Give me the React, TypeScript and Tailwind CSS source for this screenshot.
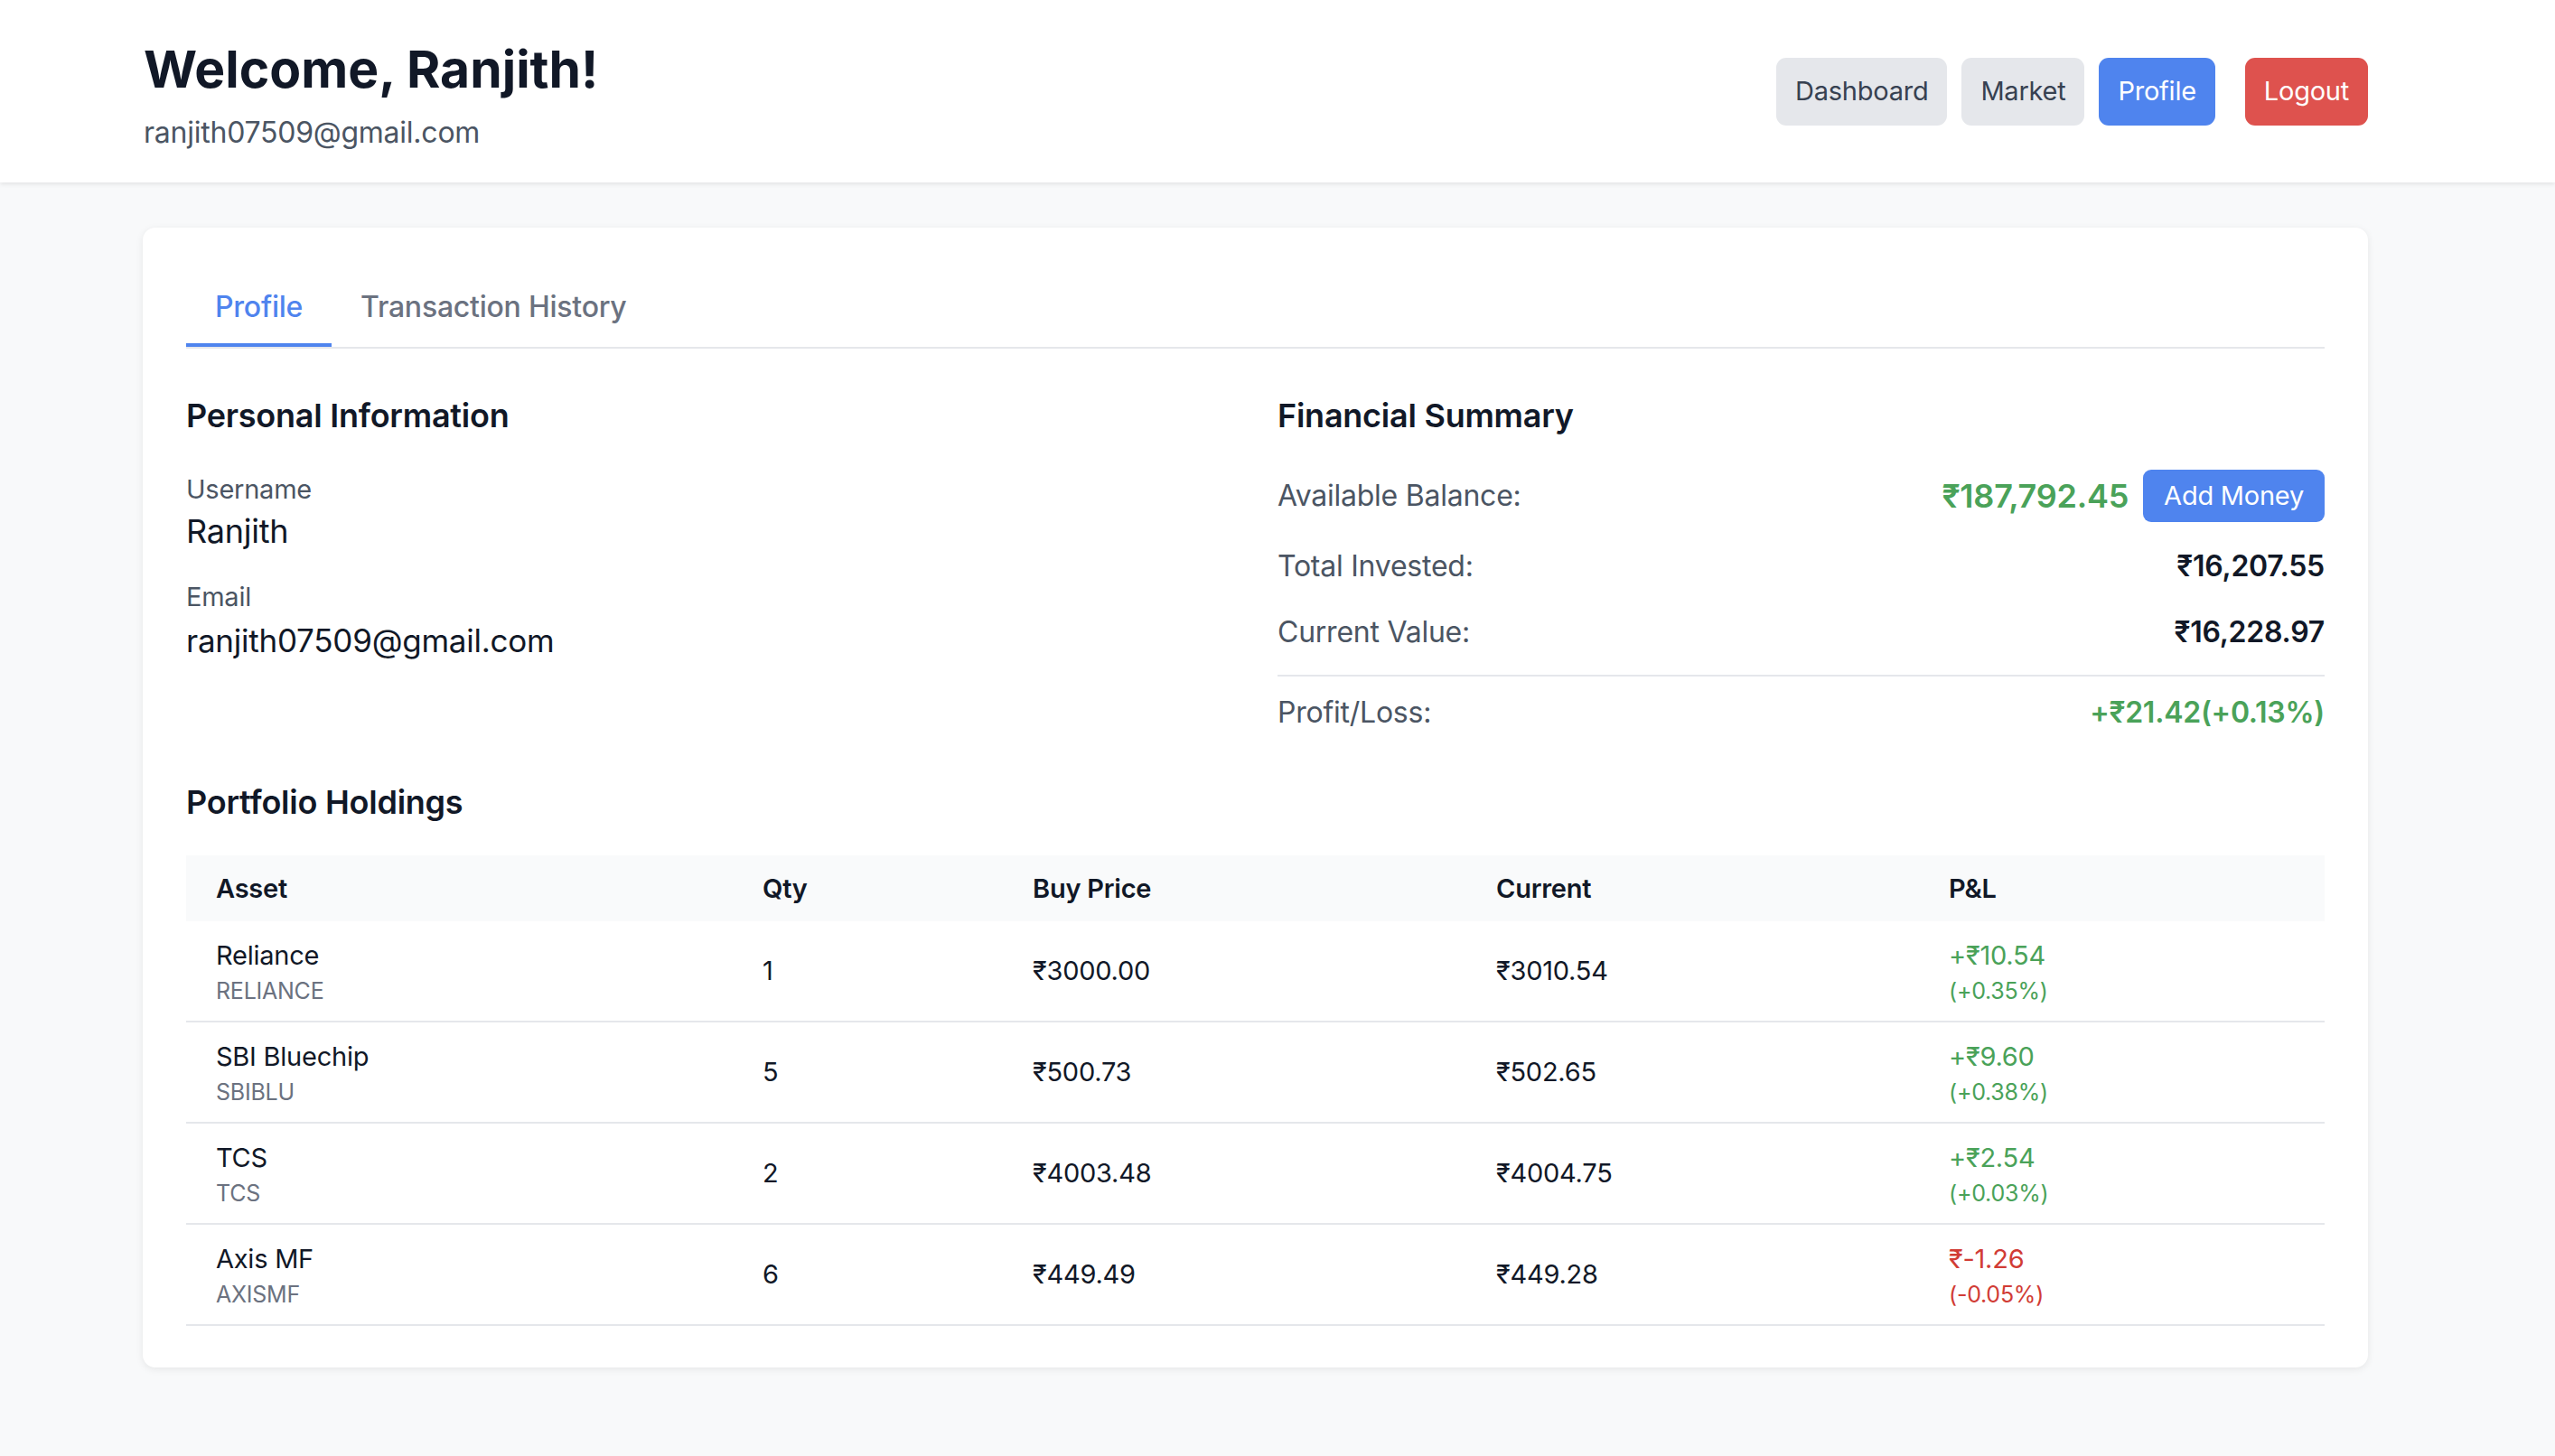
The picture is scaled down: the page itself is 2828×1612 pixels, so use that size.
import React from "react"

const holdings = [
  { name: "Reliance", symbol: "RELIANCE", qty: 1, buy: "₹3000.00", current: "₹3010.54", pl: "+₹10.54", pct: "(+0.35%)", up: true },
  { name: "SBI Bluechip", symbol: "SBIBLU", qty: 5, buy: "₹500.73", current: "₹502.65", pl: "+₹9.60", pct: "(+0.38%)", up: true },
  { name: "TCS", symbol: "TCS", qty: 2, buy: "₹4003.48", current: "₹4004.75", pl: "+₹2.54", pct: "(+0.03%)", up: true },
  { name: "Axis MF", symbol: "AXISMF", qty: 6, buy: "₹449.49", current: "₹449.28", pl: "₹-1.26", pct: "(-0.05%)", up: false },
]

export default function App() {
  return (
    <div className="min-h-screen bg-[#f8f9fa] font-['Inter','Noto_Sans',sans-serif] tracking-[-0.015em] text-[#111827]">
      {/* Header */}
      <header className="h-[202px] bg-white shadow-[0_2px_5px_rgba(0,0,0,0.09)] pl-[159px] pr-[207px] flex items-center justify-between">
        <div className="flex flex-col pt-[14px]">
          <h1 className="text-[57px] leading-[65px] font-bold tracking-normal text-[#111827]">Welcome, Ranjith!</h1>
          <p className="text-[32px] leading-[50px] mt-[13px] text-[#4b5563]">ranjith07509@gmail.com</p>
        </div>
        <nav className="flex items-center">
          <button className="h-[75px] px-[21px] rounded-[11px] bg-[#e5e7eb] text-[#374151] text-[29px]">Dashboard</button>
          <button className="h-[75px] px-[21px] ml-[16px] rounded-[11px] bg-[#e5e7eb] text-[#374151] text-[29px]">Market</button>
          <button className="h-[75px] px-[21px] ml-[16px] rounded-[11px] bg-[#4f84ee] text-white text-[29px]">Profile</button>
          <button className="h-[75px] px-[21px] ml-[33px] rounded-[11px] bg-[#de524e] text-white text-[29px]">Logout</button>
        </nav>
      </header>

      {/* Main card */}
      <main className="pl-[158px] pr-[207px] pt-[50px] pb-[97px]">
        <div className="bg-white rounded-[14px] shadow-[0_2px_8px_rgba(0,0,0,0.08)] px-[48px] pt-[48px] pb-[46px]">
          {/* Tabs */}
          <div className="flex border-b-2 border-[#e5e7eb]">
            <button className="px-[32px] py-[15px] border-b-4 border-[#4f84ee] text-[#4f84ee] text-[32px] leading-[50px] font-medium">Profile</button>
            <button className="px-[32px] py-[15px] border-b-4 border-transparent text-[#6b7280] text-[32px] leading-[50px] font-medium">Transaction History</button>
          </div>

          <div className="grid grid-cols-2 gap-x-[49px] pt-[49px]">
            {/* Personal info */}
            <section>
              <h2 className="text-[36px] leading-[50px] font-semibold">Personal Information</h2>
              <div className="mt-[35px]">
                <div className="text-[29px] leading-[43px] text-[#4b5563]">Username</div>
                <div className="text-[36px] leading-[50px]">Ranjith</div>
              </div>
              <div className="mt-[26px]">
                <div className="text-[29px] leading-[43px] text-[#4b5563]">Email</div>
                <div className="text-[35px] leading-[50px] mt-[2px]">ranjith07509@gmail.com</div>
              </div>
            </section>

            {/* Financial summary */}
            <section>
              <h2 className="text-[36px] leading-[50px] font-semibold">Financial Summary</h2>
              <div className="mt-[35px] flex items-center justify-between h-[58px]">
                <span className="text-[32px] text-[#4b5563]">Available Balance:</span>
                <div className="flex items-center gap-[16px]">
                  <span className="text-[36px] font-semibold text-[#4aa259]">₹187,792.45</span>
                  <button className="h-[58px] px-[23px] rounded-[9px] bg-[#4f84ee] text-white text-[29px]">Add Money</button>
                </div>
              </div>
              <div className="mt-[24px] flex items-center justify-between h-[50px]">
                <span className="text-[32px] text-[#4b5563]">Total Invested:</span>
                <span className="text-[32px] font-semibold">₹16,207.55</span>
              </div>
              <div className="mt-[23px] flex items-center justify-between h-[50px]">
                <span className="text-[32px] text-[#4b5563]">Current Value:</span>
                <span className="text-[32px] font-semibold">₹16,228.97</span>
              </div>
              <div className="mt-[22px] border-t-2 border-[#e5e7eb] pt-[15px] flex items-center justify-between h-[67px]">
                <span className="text-[32px] text-[#4b5563]">Profit/Loss:</span>
                <span className="text-[32px] font-semibold text-[#4aa259]">+₹21.42(+0.13%)</span>
              </div>
            </section>
          </div>

          {/* Holdings */}
          <h2 className="mt-[49px] text-[36px] leading-[50px] font-semibold">Portfolio Holdings</h2>
          <div className="mt-[34px]">
            <div className="grid grid-cols-[605px_299px_513px_501px_1fr] h-[73px] items-center bg-[#f9fafb] text-[29px] font-semibold">
              <div className="pl-[33px]">Asset</div>
              <div className="pl-[33px]">Qty</div>
              <div className="pl-[33px]">Buy Price</div>
              <div className="pl-[33px]">Current</div>
              <div className="pl-[33px]">P&amp;L</div>
            </div>
            {holdings.map((h) => (
              <div key={h.symbol} className="grid grid-cols-[605px_299px_513px_501px_1fr] h-[112px] items-center border-b-2 border-[#e5e7eb] text-[29px]">
                <div className="pl-[33px]">
                  <div className="leading-[43px]">{h.name}</div>
                  <div className="text-[25px] leading-[36px] text-[#6b7280]">{h.symbol}</div>
                </div>
                <div className="pl-[33px]">{h.qty}</div>
                <div className="pl-[33px]">{h.buy}</div>
                <div className="pl-[33px]">{h.current}</div>
                <div className={`pl-[33px] ${h.up ? "text-[#4aa259]" : "text-[#d13c35]"}`}>
                  <div className="leading-[43px]">{h.pl}</div>
                  <div className="text-[25px] leading-[36px]">{h.pct}</div>
                </div>
              </div>
            ))}
          </div>
        </div>
      </main>
    </div>
  )
}
